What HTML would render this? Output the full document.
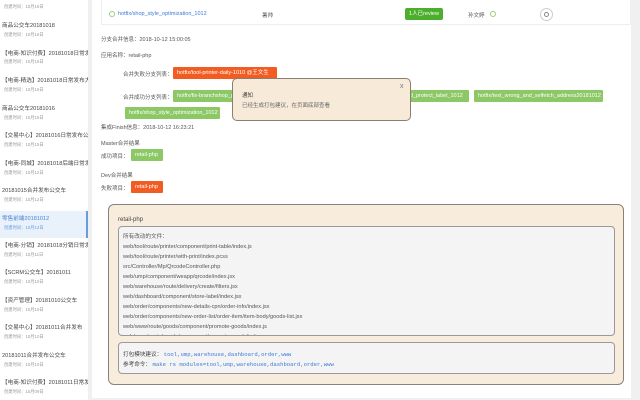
<!DOCTYPE html><html><head><meta charset="utf-8"><style>
*{margin:0;padding:0;box-sizing:border-box}
body{width:640px;height:400px;overflow:hidden;background:#f0f0f0;font-family:"Liberation Sans","Noto Sans CJK SC",sans-serif;color:#555;position:relative}
.a{position:absolute;white-space:nowrap}
#side{position:absolute;left:0;top:0;width:88px;height:400px;background:#fff;overflow:hidden}
.t{position:absolute;left:2px;font-size:5.6px;color:#444;white-space:nowrap}
.s{position:absolute;left:4px;font-size:4.3px;color:#999;white-space:nowrap}
#main{position:absolute;left:92px;top:5px;width:539px;height:393px;background:#fff}
.tag{position:absolute;height:12px;line-height:12px;font-size:5.5px;color:#fff;padding:0 4px;border-radius:1px;white-space:nowrap;overflow:hidden}
.g{background:#8cc866}.r{background:#f25c22}
.l{font-size:5.5px;color:#555}
pre{font-family:"Liberation Sans","Noto Sans CJK SC",sans-serif}
</style></head><body>
<div id="side">
<div class="s" style="top:4px">创建时间：10月16日</div>
<div class="t" style="top:21px">商品公交车20181018</div><div class="s" style="top:32px">创建时间：10月16日</div>
<div class="t" style="top:49px">【电商-知识付费】20181018日常发</div><div class="s" style="top:59px">创建时间：10月16日</div>
<div class="t" style="top:76px">【电商-精选】20181018日常发布大</div><div class="s" style="top:87px">创建时间：10月16日</div>
<div class="t" style="top:104px">商品公交车20181016</div><div class="s" style="top:115px">创建时间：10月15日</div>
<div class="t" style="top:131px">【交易中心】20181016日常发布公</div><div class="s" style="top:142px">创建时间：10月15日</div>
<div class="t" style="top:159px">【电商-同城】20181018后端日常发</div><div class="s" style="top:170px">创建时间：10月12日</div>
<div class="t" style="top:186px">20181015合并发布公交车</div><div class="s" style="top:197px">创建时间：10月12日</div>
<div style="position:absolute;left:0;top:211px;width:88px;height:27px;background:#e9f1fb;border-right:2px solid #6a9be0"></div>
<div class="t" style="top:214px;color:#4a86d8">零售前端20181012</div><div class="s" style="top:225px;color:#6a9be0">创建时间：10月12日</div>
<div class="t" style="top:241px">【电商-分销】20181018分销日常发</div><div class="s" style="top:252px">创建时间：10月11日</div>
<div class="t" style="top:268px">【SCRM公交车】20181011</div><div class="s" style="top:279px">创建时间：10月10日</div>
<div class="t" style="top:296px">【资产管理】20181010公交车</div><div class="s" style="top:307px">创建时间：10月10日</div>
<div class="t" style="top:323px">【交易中心】20181011合并发布</div><div class="s" style="top:334px">创建时间：10月10日</div>
<div class="t" style="top:351px">20181011合并发布公交车</div><div class="s" style="top:362px">创建时间：10月10日</div>
<div class="t" style="top:378px">【电商-知识付费】20181011日常发</div><div class="s" style="top:389px">创建时间：10月09日</div>
</div>
<div style="position:absolute;left:101px;top:0;width:530px;height:25px;background:#fff;border:1px solid #eee;border-top:none"></div>
<div class="a" style="left:109px;top:11px;width:6px;height:6px;border:1px solid #9ad07a;border-radius:50%"></div>
<div class="a l" style="left:118px;top:11px;color:#3d7ad8">hotfix/shop_style_optimization_1012</div>
<div class="a l" style="left:262px;top:11px">暑帅</div>
<div class="a" style="left:405px;top:8px;width:38px;height:12px;background:#4caf2c;border-radius:2px;color:#fff;font-size:5.5px;line-height:12px;text-align:center">1人已review</div>
<div class="a l" style="left:468px;top:11px">孙文婷</div>
<div class="a" style="left:490px;top:11px;width:6px;height:6px;border:1px solid #9ad07a;border-radius:50%"></div>
<div class="a" style="left:540px;top:8px;width:13px;height:13px;border:1px solid #ccc;border-radius:50%"></div>
<div class="a" style="left:544px;top:12px;width:5px;height:5px;border:1px solid #888;border-radius:50%"></div>
<div id="main" style="top:25px;left:92px;height:373px;"></div>
<div class="a" style="left:92px;top:0;width:9px;height:25px;background:#fff"></div>
<div class="a l" style="left:101px;top:35px">分支合并信息：2018-10-12 15:00:05</div>
<div class="a l" style="left:101px;top:51px">应用名称：retail-php</div>
<div class="a l" style="left:123px;top:70px">合并失败分支列表：</div>
<div class="tag r" style="left:173px;top:67px;width:104px">hotfix/tool-printer-daily-1010 @王文生</div>
<div class="a l" style="left:123px;top:93px">合并成功分支列表：</div>
<div class="tag g" style="left:173px;top:90px;width:296px">hotfix/fix-branchshop_guard_protect_label_1012</div>
<div class="a" style="left:408px;top:90px;font-size:5.5px;color:#fff;line-height:12px;background:#8cc866;padding-right:4px;z-index:1">rd_protect_label_1012</div>
<div class="tag g" style="left:474px;top:90px;width:129px">hotfix/text_wrong_and_selfetch_address20181012</div>
<div class="tag g" style="left:125px;top:107px;width:95px">hotfix/shop_style_optimization_1012</div>
<div class="a l" style="left:101px;top:123px">集成Finish信息：2018-10-12 16:23:21</div>
<div class="a l" style="left:101px;top:139px">Master合并结果</div>
<div class="a l" style="left:101px;top:152px">成功项目：</div>
<div class="tag g" style="left:131px;top:149px;width:32px">retail-php</div>
<div class="a l" style="left:101px;top:171px">Dev合并结果</div>
<div class="a l" style="left:101px;top:184px">失败项目：</div>
<div class="tag r" style="left:131px;top:181px;width:32px">retail-php</div>
<div class="a" style="left:232px;top:78px;width:179px;height:43px;background:#f8ead9;border:1px solid #8a7e70;border-radius:5px;z-index:2">
<div class="a" style="left:9px;top:12px;font-size:5.5px;color:#444">通知</div>
<div class="a" style="left:9px;top:22px;font-size:5.5px;color:#666">已经生成打包建议，在页面底部查看</div>
<div class="a" style="left:167px;top:4px;font-size:7px;color:#777">x</div></div>
<div class="a" style="left:108px;top:204px;width:516px;height:181px;background:#f8ecdc;border:1px solid #8a8278;border-radius:6px">
<div class="a" style="left:9px;top:12px;font-size:6px;color:#444">retail-php</div>
<div class="a" style="left:9px;top:21px;width:497px;height:110px;background:#f4f4f4;border:1px solid #999;border-radius:4px;overflow:hidden">
<pre style="position:absolute;left:4px;top:5px;font-size:5.6px;line-height:10px;color:#555">所有改动的文件：
web/tool/route/printer/component/print-table/index.js
web/tool/route/printer/with-print/index.pcss
src/Controller/Mp/QrcodeController.php
web/ump/component/weapp/qrcode/index.jsx
web/warehouse/route/delivery/create/filters.jsx
web/dashboard/component/store-label/index.jsx
web/order/components/new-details-cpn/order-info/index.jsx
web/order/components/new-order-list/order-item/item-body/goods-list.jsx
web/www/route/goods/component/promote-goods/index.js
web/www/route/goods/component/promote-goods/index.pcss</pre></div>
<div class="a" style="left:9px;top:137px;width:497px;height:32px;background:#f4f4f4;border:1px solid #999;border-radius:4px">
<div class="a" style="left:4px;top:7px;font-size:5.6px;color:#444">打包模块建议： <span style="font-family:'Liberation Mono',monospace;color:#3d7ad8">tool,ump,warehouse,dashboard,order,www</span></div>
<div class="a" style="left:4px;top:17px;font-size:5.6px;color:#444">参考命令： <span style="font-family:'Liberation Mono',monospace;color:#3d7ad8">make rs modules=tool,ump,warehouse,dashboard,order,www</span></div></div>
</div>
</body></html>
